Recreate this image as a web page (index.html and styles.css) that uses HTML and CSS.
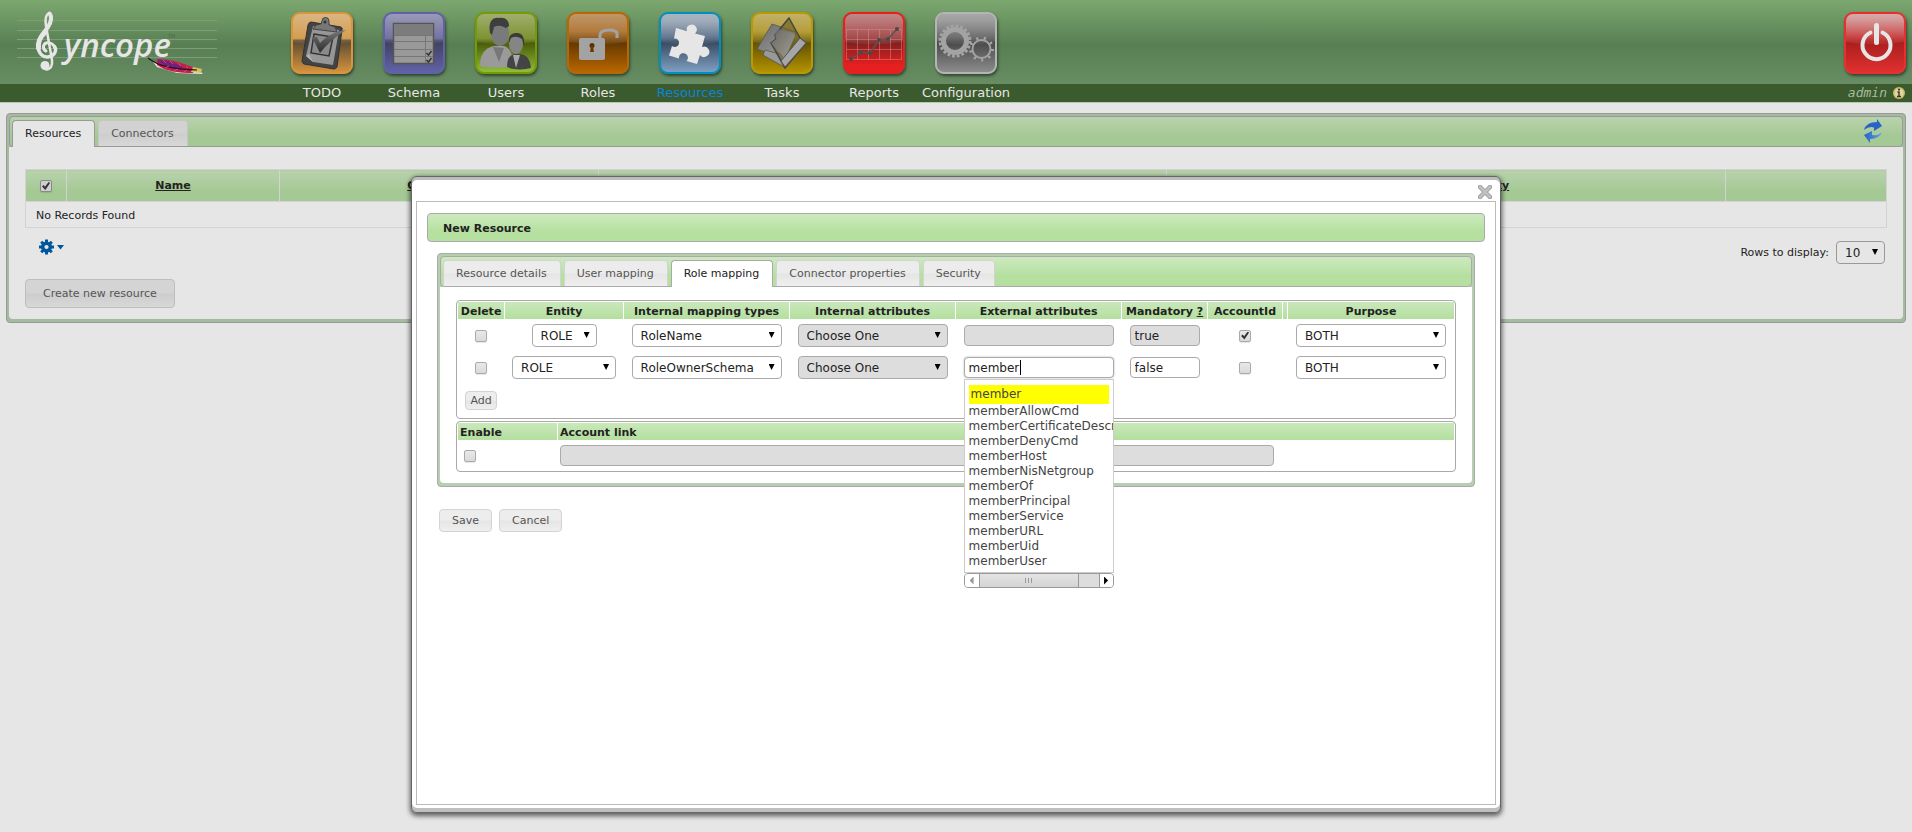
FILE: index.html
```html
<!DOCTYPE html>
<html lang="en">
<head>
<meta charset="utf-8">
<title>Syncope - Resources</title>
<link rel="stylesheet" href="styles.css">
</head>
<body>
<header class="top">
  <a class="logo" href="#" aria-label="Syncope">
    <svg width="210" height="80" viewBox="0 0 210 80">
      <g stroke="#7d9d78" stroke-width="1"><path d="M7 20.500H207M7 30.500H207M7 39.500H207M7 48.500H207M7 57.500H207"/></g>
      <g fill="none" stroke="#e6e6e6" stroke-linecap="round" stroke-linejoin="round">
        <path stroke-width="2.500" d="M39 13C35 15 35 20 36 26L42 60Q43 69 36 69.500"/>
        <path stroke-width="4" d="M39.500 13.500C42 16 41.500 22 38 27L32 35"/>
        <path stroke-width="5" d="M34.500 33C29 38 28 43 28.500 48"/>
        <path stroke-width="3.500" d="M28 47C29 54 33 57.500 38 57C45 56 47 50 44.500 46.500"/>
        <path stroke-width="3" d="M45 48C43 42 35 41 33.500 46Q33 50 36 51"/>
      </g>
      <circle cx="35" cy="65.500" r="4.500" fill="#e6e6e6"/>
      <text x="54" y="57" class="logo-text">yncope</text>
      <text x="158" y="38" class="logo-tm">TM</text>
      <path fill="#e6e6e6" d="M143 62l4 5 20 6 26 1-2-2z"/>
      <path fill="#c41f4b" d="M147 59c15 0 28 5 38 9l-2 5c-12 0-27-1-36-8z"/>
      <path fill="#6d2380" d="M148 60c9 0 17 3 25 7l-2 2c-9-1-16-3-22-7z"/>
      <path fill="#d9c063" d="M183 67l9 2-1 4-10-1z"/>
      <path fill="none" stroke="#241028" stroke-width="1.200" d="M138 58c10 8 24 11 49 12"/>
      <path stroke="#e04a68" stroke-width="1" d="M153 60l3 3M160 61l3 3M168 63l3 3M176 66l2 2M155 68l4-2M164 71l4-2M174 72l3-2"/>
    </svg>
  </a>
  <nav class="menu">
    <a href="#" class="item"><span class="tile todo"><svg viewBox="0 0 62 62">
      <defs>
        <linearGradient id="ink" x1="0" y1="0" x2="0" y2="1"><stop offset="0" stop-color="#777"/><stop offset="1" stop-color="#2c2c2c"/></linearGradient>
        <linearGradient id="steel" x1="0" y1="0" x2="1" y2="1"><stop offset="0" stop-color="#686868"/><stop offset="1" stop-color="#a8a8a8"/></linearGradient>
      </defs>
      <path d="M20 10L50 15Q52 16 51 18L46 55Q45 57 43 57L13 52Q11 51 11 49L17 13Q18 10 20 10z" fill="#434343" stroke="#333"/>
      <path d="M22 14L48 18 42 53 22 50 15 44z" fill="#969696"/>
      <path d="M15 44l3-2 4 8z" fill="#b2b2b2"/>
      <path d="M23 22L42 25 38 44 20 41z" fill="#8a8a8a" stroke="#333" stroke-width="1.500"/>
      <path d="M22 17l3-4 5-1 1-3a3.500 3.500 0 0 1 7 0v4l6 2 2 5z" fill="#777" stroke="#444"/><circle cx="34" cy="10" r="1.500" fill="#333"/>
      <path d="M21 25l5 0 3 6Q39 20 55 18 39 28 29 41z" fill="url(#ink)"/></svg></span>TODO</a>
    <a href="#" class="item"><span class="tile schema"><svg viewBox="0 0 62 62">
      <rect x="10.500" y="11.500" width="40" height="40" fill="#999" stroke="#555" stroke-width="1.500"/><path d="M11 12h39v11H11z" fill="#7c7c7c"/>
      <path d="M11 23.500h39M11 29.500h39M11 37.500h39M11 44.500h39M42.500 24v27" stroke="#777" fill="none"/>
      <path d="M43.500 41l2 2 3-4M43.500 48l2 2 3-4" stroke="#333" stroke-width="1.500" fill="none"/></svg></span>Schema</a>
    <a href="#" class="item"><span class="tile users"><svg viewBox="0 0 62 62">
      <path d="M5 54c0-12 5-18 14-20h10c6 2 9 8 9 20-10 2-24 2-33 0z" fill="#9a9a9a"/><path d="M18 35l6 15 5-14z" fill="#777"/>
      <ellipse cx="25" cy="21" rx="9" ry="13" fill="#7a7a7a"/><path d="M15 21C13 9 18 5 24 6c6-1 10 2 10 8l-3 2q-7-4-12-1l-2 8z" fill="#3e3e3e"/>
      <path d="M32 55c0-9 3-12 8-13h5c7 1 10 5 11 14-8 2-17 2-24-1z" fill="#444"/><path d="M38 43l3 13 4-13z" fill="#aaa"/>
      <ellipse cx="41" cy="32" rx="7" ry="10" fill="#858585"/><path d="M34 31c-1-8 3-10 8-10s8 4 7 13l-2-7q-6-4-11-1z" fill="#3a3a3a"/></svg></span>Users</a>
    <a href="#" class="item"><span class="tile roles"><svg viewBox="0 0 62 62">
      <rect x="12" y="26" width="26" height="22" rx="2" fill="#a3a3a3"/><path d="M33 26v-3q0-5 9-5t8 5v3" fill="none" stroke="#a3a3a3" stroke-width="3"/>
      <circle cx="25" cy="33.500" r="2.500" fill="#5a3000"/><path d="M24 34h2l1 6h-4z" fill="#6a3a00"/></svg></span>Roles</a>
    <a href="#" class="item current"><span class="tile resources"><svg viewBox="0 0 62 62">
      <path fill="#e6e6e6" d="M17 16L28 19.200A5 5 0 1 1 36 21.400L46 24 43 35A5.200 5.200 0 1 1 41 43L38 52 27.500 49A4.500 4.500 0 1 0 20 46.500L10 43.500 13 34A4.300 4.300 0 1 0 15 26.500z"/></svg></span>Resources</a>
    <a href="#" class="item"><span class="tile tasks"><svg viewBox="0 0 62 62">
      <path d="M21 12L45 20 34 47 6 37z" fill="url(#steel)" stroke="#555" stroke-width=".8"/><path d="M14 38L12 43 33 55 36 44z" fill="#999" stroke="#555" stroke-width=".8"/>
      <path d="M38 6L24 23 25 27 20 31 34 56 55 31 49 26z" fill="#6b6125" fill-opacity=".65" stroke="#444" stroke-width="1.500"/><path d="M26 17L43 21 44 24 34 47 20 31 25 27 24 23z" fill="url(#steel)" opacity=".8"/>
      <path d="M49 26L55 31 34 55 30 49z" fill="#a6a6a6" stroke="#555" stroke-width="1"/></svg></span>Tasks</a>
    <a href="#" class="item"><span class="tile reports"><svg viewBox="0 0 62 62">
      <path d="M3.500 17.500h55v30h-55zM3.500 27.500h55M3.500 37.500h55M14.500 17.500v30M25.500 17.500v30M36.500 17.500v30M47.500 17.500v30" fill="none" stroke="#e89090" stroke-opacity=".45"/>
      <path d="M8 47L18 40 27 41 36 28 45 27 54 17" fill="none" stroke="#555" stroke-width="1.500"/>
      <g fill="#4a4a4a"><circle cx="8" cy="47" r="2"/><circle cx="18" cy="40" r="2"/><circle cx="27" cy="41" r="2"/><circle cx="36" cy="28" r="2"/><circle cx="45" cy="27" r="2"/><circle cx="54" cy="17" r="2"/></g></svg></span>Reports</a>
    <a href="#" class="item"><span class="tile config"><svg viewBox="0 0 62 62">
      <circle cx="20" cy="29" r="11.500" fill="none" stroke="#a3a3a3" stroke-width="5"/><circle cx="20" cy="29" r="15" fill="none" stroke="#a3a3a3" stroke-width="3" stroke-dasharray="2.900 1.812"/>
      <circle cx="46.500" cy="37" r="9" fill="none" stroke="#a3a3a3" stroke-width="2"/><circle cx="46.500" cy="37" r="11" fill="none" stroke="#a3a3a3" stroke-width="3" stroke-dasharray="2.200 5.480"/></svg></span>Configuration</a>
  </nav>
  <div class="session">
    <a href="#" class="tile logout" aria-label="Log out"><svg viewBox="0 0 62 62"><path d="M26.500 20.500A14 14 0 1 0 38.500 20.500" fill="none" stroke="#e6e6e6" stroke-width="4" stroke-linecap="round"/><path d="M32.500 13.500v17" stroke="#e6e6e6" stroke-width="5" stroke-linecap="round"/></svg></a>
    <span class="who">admin <svg width="12" height="12" viewBox="0 0 12 12"><circle cx="6" cy="6" r="6" fill="#cdbb68"/><circle cx="6" cy="6" r="4.500" fill="#dfd6a4"/><path d="M4.500 5H6v4.500M4 9.500h4" stroke="#3a3420" stroke-width="1.400" fill="none"/><circle cx="6" cy="2.600" r="1.100" fill="#3a3420"/></svg></span>
  </div>
</header>

<main class="panel page">
  <div class="panel-head">
    <a href="#" class="tab on">Resources</a><a href="#" class="tab">Connectors</a>
    <button class="refresh" aria-label="Refresh"><svg width="18" height="24" viewBox="0 0 18 24">
      <defs><linearGradient id="blue"><stop offset="0" stop-color="#2a5fc4"/><stop offset="1" stop-color="#5aa5e6"/></linearGradient></defs>
      <path d="M0 11Q2 3 13 3V0l5 7-8 5V8.500Q5 7 0 11z" fill="#2a62c8"/><path d="M18 13.500Q15 20 6 20v4L0 16l8-4v4q5 1 10-2.500z" fill="url(#blue)"/></svg></button>
  </div>
  <div class="panel-body">
    <table class="grid">
      <colgroup><col class="g-check"><col class="g-name"><col class="g-conn"><col class="g-wide"><col class="g-prio"><col></colgroup>
      <thead><tr><th><input type="checkbox" checked aria-label="Select all"></th><th><a href="#">Name</a></th><th><a href="#">Connector</a></th><th></th><th><a href="#">Propagation Priority</a></th><th></th></tr></thead>
      <tbody><tr><td colspan="6">No Records Found</td></tr></tbody>
    </table>
    <div class="tools">
      <button class="gear" aria-label="Table settings"><svg width="26" height="16" viewBox="0 0 26 16"><circle cx="7.500" cy="8" r="3.800" fill="none" stroke="#00569d" stroke-width="3.400"/><path d="M7.500 .5v3M7.500 12.500v3M0 8h3M12 8h3M2.200 2.700l2 2M10.800 11.300l2 2M2.200 13.300l2-2M10.800 4.700l2-2" stroke="#00569d" stroke-width="3"/><path d="M18 6h7l-3.500 4.500z" fill="#00569d"/></svg></button>
      <label class="rows">Rows to display: <span class="pick"><select class="w-rows"><option>10</option></select></span></label>
    </div>
    <button class="btn large">Create new resource</button>
  </div>
</main>

<section class="modal" role="dialog" aria-label="New Resource">
  <div class="modal-bar"><button class="close" aria-label="Close"><svg width="14" height="14" viewBox="0 0 14 14"><path d="M2 2l10 10M12 2L2 12" stroke="#9a9a9a" stroke-width="4.400" stroke-linecap="round"/><path d="M2 2l10 10M12 2L2 12" stroke="#c0c0c0" stroke-width="2.800" stroke-linecap="round"/></svg></button></div>
  <form class="frame">
    <h1 class="heading">New Resource</h1>
    <div class="panel inner">
      <div class="panel-head"><a href="#" class="tab">Resource details</a><a href="#" class="tab">User mapping</a><a href="#" class="tab on">Role mapping</a><a href="#" class="tab">Connector properties</a><a href="#" class="tab">Security</a></div>
      <div class="panel-body">
        <div class="box">
          <table class="map">
            <colgroup><col class="c-del"><col class="c-ent"><col class="c-int"><col class="c-int"><col class="c-ext"><col class="c-man"><col class="c-acc"><col class="c-gap"><col></colgroup>
            <thead><tr><th>Delete</th><th>Entity</th><th>Internal mapping types</th><th>Internal attributes</th><th>External attributes</th><th>Mandatory <a href="#">?</a></th><th>AccountId</th><th></th><th>Purpose</th></tr></thead>
            <tbody>
            <tr>
              <td><input type="checkbox" aria-label="Delete row 1"></td>
              <td><span class="pick"><select class="w-role" aria-label="Entity"><option>ROLE</option></select></span></td>
              <td><span class="pick"><select aria-label="Internal mapping type"><option>RoleName</option></select></span></td>
              <td><span class="pick"><select disabled aria-label="Internal attribute"><option>Choose One</option></select></span></td>
              <td><input type="text" class="w-ext" disabled aria-label="External attribute"></td>
              <td><input type="text" class="w-man" disabled value="true" aria-label="Mandatory"></td>
              <td><input type="checkbox" checked aria-label="AccountId"></td><td></td>
              <td><span class="pick"><select aria-label="Purpose"><option>BOTH</option></select></span></td>
            </tr>
            <tr>
              <td><input type="checkbox" aria-label="Delete row 2"></td>
              <td><span class="pick"><select class="w-entity" aria-label="Entity"><option>ROLE</option></select></span></td>
              <td><span class="pick"><select aria-label="Internal mapping type"><option>RoleOwnerSchema</option></select></span></td>
              <td><span class="pick"><select disabled aria-label="Internal attribute"><option>Choose One</option></select></span></td>
              <td><div class="combo"><input type="text" class="w-ext active" value="member" aria-label="External attribute"><span class="cursor"></span>
                <div class="suggest">
                  <ul><li class="hit">member</li><li>memberAllowCmd</li><li>memberCertificateDescription</li><li>memberDenyCmd</li><li>memberHost</li><li>memberNisNetgroup</li><li>memberOf</li><li>memberPrincipal</li><li>memberService</li><li>memberURL</li><li>memberUid</li><li>memberUser</li></ul>
                  <div class="scroll"><span class="arrow left"></span><span class="thumb"><i></i></span><span class="arrow right"></span></div>
                </div></div></td>
              <td><input type="text" class="w-man" value="false" aria-label="Mandatory"></td>
              <td><input type="checkbox" aria-label="AccountId"></td><td></td>
              <td><span class="pick"><select aria-label="Purpose"><option>BOTH</option></select></span></td>
            </tr>
            <tr class="add"><td><button type="button" class="btn small">Add</button></td><td colspan="8"></td></tr>
            </tbody>
          </table>
        </div>
        <div class="box">
          <table class="map link">
            <colgroup><col class="c-enable"><col></colgroup>
            <thead><tr><th>Enable</th><th>Account link</th></tr></thead>
            <tbody><tr><td><input type="checkbox" class="enable" aria-label="Enable"></td><td><input type="text" class="w-link" disabled aria-label="Account link"></td></tr></tbody>
          </table>
        </div>
      </div>
    </div>
    <div class="actions"><button type="button" class="btn">Save</button><button type="button" class="btn">Cancel</button></div>
  </form>
</section>
</body>
</html>
```
FILE: styles.css
```css
* { box-sizing: border-box; }
body {
  margin: 0;
  min-height: 100vh;
  background: #e6e6e6;
  color: #222;
  font: 11px/16px "DejaVu Sans", Verdana, sans-serif;
}
a { color: inherit; }
button { font: inherit; color: inherit; padding: 0; border: 0; background: none; }

/* header */
.top {
  display: flex;
  height: 103px;
  background:
    linear-gradient(#3b5a2d, #3b5a2d) 0 84px / 100% 18px no-repeat,
    linear-gradient(#7ca86f 0, #587e53 45px, #688d64 84px) 0 0 / 100% 84px no-repeat,
    #b5cbb0;
}
.logo { flex: none; width: 266px; padding-left: 10px; }
.logo svg { display: block; }
.logo-text { font: italic 600 33px "Open Sans", sans-serif; fill: #e6e6e6; }
.logo-tm { font: 5px "DejaVu Sans", sans-serif; fill: #4f6c4b; }
.menu { display: flex; padding-left: 10px; }
.item {
  display: flex;
  flex-direction: column;
  align-items: center;
  gap: 10px;
  width: 92px;
  padding-top: 12px;
  font-size: 13px;
  line-height: 18px;
  color: #e6e6e6;
  text-decoration: none;
}
.item.current { color: #0a84d8; }
.tile {
  position: relative;
  display: block;
  width: 62px;
  height: 62px;
  border: 2px solid;
  border-radius: 9px;
  overflow: hidden;
  box-shadow: 1px 2px 3px rgba(0, 0, 0, .5);
}
.tile::before {
  content: "";
  position: absolute;
  inset: 0 -14px 28px;
  border-radius: 0 0 50% 50% / 0 0 8px 8px;
  background: linear-gradient(rgba(225, 225, 225, .45), rgba(225, 225, 225, .08));
}
.tile svg { position: absolute; inset: -2px; width: 62px; height: 62px; }
.todo { border-color: #d9953c; background: linear-gradient(#d39237 42%, #5c4a33 46%, #d3923d); }
.schema { border-color: #6062a8; background: linear-gradient(#5f5f97 42%, #40405c 46%, #6062a8); }
.users { border-color: #769b00; background: linear-gradient(#6c8512 42%, #4a5c0a 50%, #8fbe38); }
.roles { border-color: #b96800; background: linear-gradient(#a35b0a 30%, #663900 50%, #b86600); }
.resources { border-color: #0090c0; background: linear-gradient(#7c8fa6 10%, #47617d 42%, #384a60 48%, #7f9fc2); }
.tasks { border-color: #ba9900; background: linear-gradient(#a88a06 30%, #655300 50%, #b39200); }
.reports { border-color: #e61f1f; background: linear-gradient(#a53d3d 10%, #983030 42%, #7c2020 48%, #e61f1f 88%); }
.config { border-color: #b5b5b5; background: linear-gradient(#777 10%, #555 42%, #474747 48%, #8c8c8c); }
.logout { border-color: #e63030; background: linear-gradient(#cf7777 5%, #c42020 42%, #aa1e1e 48%, #e03030); }
.session {
  display: flex;
  flex-direction: column;
  align-items: flex-end;
  gap: 10px;
  margin-left: auto;
  padding: 12px 6px 0 0;
}
.who {
  display: flex;
  align-items: center;
  gap: 6px;
  padding-right: 1px;
  font: italic 13px/18px "DejaVu Sans Mono", monospace;
  color: #a5bda0;
}

/* tabbed panels */
.panel {
  padding: 2px 2px 3px;
  border: 1px solid #999;
  border-radius: 4px;
  background: #a5bba0;
}
.page { margin: 10px 6px 0; }
.panel-head {
  display: flex;
  align-items: flex-start;
  gap: 3px;
  height: 31px;
  padding: 3px 2px 0;
  border: 1px solid #999;
  border-radius: 4px;
  background: linear-gradient(#b9d2ae, #a5c994 65%);
}
.tab {
  height: 26px;
  padding: 5px 13px 0 12px;
  border: 1px solid #c6c6c6;
  border-bottom: 0;
  border-radius: 4px 4px 0 0;
  background: linear-gradient(#d2d2d2 48%, #cdcdcd 52%, #d8d8d8);
  color: #555;
  text-decoration: none;
  white-space: nowrap;
}
.tab.on { height: 27px; border-color: #999; background: #e6e6e6; color: #222; }
.panel-body { padding: 22px 16px 11px; border-radius: 0 0 4px 4px; background: #e6e6e6; }
.refresh { height: 24px; margin: -1px 18px 0 auto; }
.refresh svg { display: block; }

.grid { width: 100%; table-layout: fixed; border-collapse: collapse; }
.grid th, .grid td { border: 1px solid #d3d3d3; }
.grid th { height: 32px; padding: 1px 0 0; background: linear-gradient(#b9d2ae, #a5c994 65%); vertical-align: middle; }
.grid td { height: 26px; padding: 2px 10px 0; }
.g-check { width: 41px; }
.g-name { width: 213px; }
.g-conn { width: 319px; }
.g-wide { width: 568px; }
.g-prio { width: 559px; }
.tools { display: flex; align-items: flex-start; justify-content: space-between; padding: 11px 2px 15px 14px; }
.gear { height: 16px; }
.gear svg { display: block; }
.rows { display: flex; align-items: center; gap: 7px; padding-top: 2px; }

/* controls */
.btn {
  height: 23px;
  padding: 1px 12px 0;
  border: 1px solid #d3d3d3;
  border-radius: 4px;
  background: linear-gradient(#ededed 48%, #e5e5e5 52%, #efefef);
  color: #555;
}
.btn.large { display: block; height: 29px; padding: 1px 17px 0; border-color: #bebebe; background: linear-gradient(#d4d4d4 48%, #cdcdcd 52%, #d8d8d8); }
.btn.small { height: 19px; padding: 1px 4px 0; }
.pick { position: relative; display: inline-block; vertical-align: middle; }
.pick::after {
  content: "";
  position: absolute;
  top: 8px;
  right: 7px;
  width: 6px;
  height: 6px;
  background: #000;
  clip-path: polygon(0 0, 100% 0, 50% 100%);
  pointer-events: none;
}
select, input[type="text"] {
  display: block;
  border: 1px solid #aaa;
  border-radius: 4px;
  background: #fff;
  color: #222;
  font: 12px/16px "DejaVu Sans", Verdana, sans-serif;
}
select { appearance: none; width: 150px; height: 23px; padding: 0 20px 0 8px; }
input[type="text"] { height: 21px; padding: 0 4px; margin: auto; }
select:disabled, input[type="text"]:disabled { background: #ddd; color: #222; opacity: 1; }
.w-rows { width: 49px; background: #e6e6e6; border-color: #999; }
.w-role { width: 65px; }
.w-entity { width: 104px; }
.w-ext { width: 150px; }
.w-man { width: 70px; }
input.w-link { width: 80%; margin: 0; }
.active { outline: 0; box-shadow: 0 0 2px #aaa; }
input[type="checkbox"] {
  appearance: none;
  position: relative;
  display: block;
  width: 12px;
  height: 12px;
  margin: 0 auto;
  border: 1px solid #aaa;
  border-radius: 2px;
  background: linear-gradient(#e8e8e8, #dadada);
  box-shadow: 0 1px 1px rgba(0, 0, 0, .1);
}
input[type="checkbox"]:checked::before {
  content: "";
  position: absolute;
  inset: 1px;
  background: #333;
  clip-path: polygon(0 55%, 20% 38%, 38% 58%, 82% 0, 100% 14%, 42% 100%);
}
.grid input[type="checkbox"] { background: #cfcfcf; border-color: #888; }
input.enable[type="checkbox"] { margin: 0 4px; }

/* dialog */
.modal {
  position: absolute;
  inset: 176px 0 19px;
  display: flex;
  flex-direction: column;
  width: 57%;
  margin: 0 auto;
  padding: 3px 4px 7px;
  border: 1px solid #666;
  border-radius: 6px;
  background: #fff;
  box-shadow: inset 0 3px 0 #bcbcbc, inset 0 -4px 0 #bfbfbf, 0 2px 5px 1px rgba(0, 0, 0, .6);
}
.modal-bar { display: flex; justify-content: flex-end; height: 21px; padding: 5px 4px 0 0; }
.close { height: 14px; }
.close svg { display: block; }
.frame { flex: 1; padding: 11px 10px; border: 1px solid #bbb; }
.heading {
  height: 29px;
  margin: 0 0 11px;
  padding: 7px 15px 0;
  border: 1px solid #aaa;
  border-radius: 4px;
  background: linear-gradient(#cdeabf, #b5e0a0 65%);
  font-size: 11px;
  line-height: 16px;
}
.inner { margin: 0 10px; background: #b7cfb1; border-color: #aaa; }
.inner .panel-head { border-color: #aaa; background: linear-gradient(#cdeabf, #b5e0a0 65%); }
.inner .tab { border-color: #d3d3d3; background: linear-gradient(#ececec 48%, #e5e5e5 52%, #efefef); }
.inner .tab.on { border-color: #aaa; background: #fff; }
.inner .panel-body { display: flex; flex-direction: column; gap: 2px; padding: 13px 16px 11px; background: #fff; }
.box { border: 1px solid #aaa; border-radius: 4px; }
.map { width: 100%; table-layout: fixed; border-spacing: 1px; }
.map th { height: 17px; padding: 1px 0 0; line-height: 15px; background: linear-gradient(#c9e8ba, #b4df9f); white-space: nowrap; }
.map td { height: 31px; padding: 0; text-align: center; }
.map .add td { height: 33px; }
.c-del { width: 46px; }
.c-ent { width: 118px; }
.c-int { width: 165px; }
.c-ext { width: 165px; }
.c-man { width: 85px; }
.c-acc { width: 74px; }
.c-gap { width: 4px; }
.c-enable { width: 99px; }
.map.link th { padding: 1px 2px 0; text-align: left; }
.link td { height: 29px; padding: 0 2px; }
.combo { position: relative; width: 150px; margin: 0 auto; }
.cursor { position: absolute; top: 3px; left: 56px; width: 1px; height: 15px; background: #000; }
.suggest { position: absolute; z-index: 2; top: 22px; left: 0; width: 100%; }
.suggest ul {
  margin: 0;
  padding: 5px 4px 3px;
  border: 1px solid #ccc;
  background: #fff;
  list-style: none;
  overflow: hidden;
  text-align: left;
  font-size: 12px;
  line-height: 15px;
  color: #444;
}
.suggest .hit { padding: 2px; background: #ff0; }
.scroll { display: flex; height: 15px; border: 1px solid #999; border-radius: 4px; background: #ddd; overflow: hidden; }
.arrow { display: grid; place-items: center; width: 14px; background: #fff; }
.arrow::before { content: ""; width: 4px; height: 8px; background: #000; clip-path: polygon(0 0, 100% 50%, 0 100%); }
.arrow.left::before { background: #999; clip-path: polygon(100% 0, 0 50%, 100% 100%); }
.arrow.right { margin-left: auto; border-left: 1px solid #999; }
.thumb { display: grid; place-items: center; width: 68%; border: solid #999; border-width: 0 1px; background: linear-gradient(#e4e4e4, #d4d4d4); }
.thumb i { width: 7px; height: 5px; background: repeating-linear-gradient(90deg, #999 0 1px, transparent 1px 3px); }
.actions { display: flex; gap: 7px; margin: 22px 12px 0; }
```
